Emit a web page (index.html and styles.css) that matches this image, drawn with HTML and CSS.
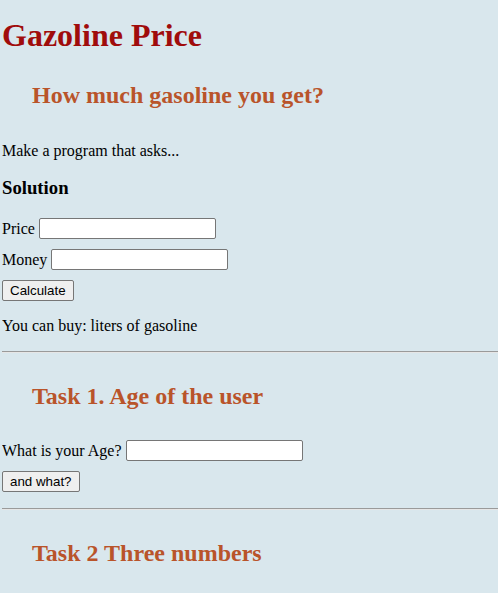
FILE: index.html
```html
<!DOCTYPE html>
<html>
<head>
<meta charset="utf-8">
<title>Gazoline Price</title>
<link rel="stylesheet" href="styles.css">
</head>
<body>
<h1 class="title">Gazoline Price</h1>
<h2 class="task">How much gasoline you get?</h2>
<p class="text intro">Make a program that asks...</p>
<h3 class="sub">Solution</h3>
<div class="form">
  <div class="row"><label>Price</label> <input type="text" class="field"></div>
  <div class="row"><label>Money</label> <input type="text" class="field"></div>
  <div class="row"><button class="btn">Calculate</button></div>
</div>
<p class="text">You can buy: liters of gasoline</p>
<hr class="rule">
<h2 class="task">Task 1. Age of the user</h2>
<div class="form">
  <div class="row"><label>What is your Age?</label> <input type="text" class="field"></div>
  <div class="row"><button class="btn">and what?</button></div>
</div>
<hr class="rule">
<h2 class="task">Task 2 Three numbers</h2>
</body>
</html>
```
FILE: styles.css
```css
html { background: #d9e7ed; }
body {
  margin: 0 0 0 2px;
  font-family: "Liberation Serif", "Times New Roman", serif;
  font-size: 16px;
  color: #000;
  background: #d9e7ed;
}
.title {
  font-size: 32px;
  color: #a00c0c;
  margin: 17px 0 18px;
}
.task {
  font-size: 24px;
  color: #b9542a;
  padding: 10px 0 10px 30px;
  margin: 18px 0 20px;
}
.text { margin: 16px 0; }
.intro { margin-top: 23px; }
.sub { font-size: 18.72px; margin: 17px 0 19px; }
.form { display: flex; flex-direction: column; gap: 10px; }
.row { display: flex; align-items: center; gap: 4px; }
.field {
  width: 177px;
  height: 21px;
  box-sizing: border-box;
  border: 1px solid #767676;
  border-radius: 2px;
  background: #fff;
  margin: 0;
  padding: 1px 2px;
  font: 13.33px "Liberation Sans", Arial, sans-serif;
}
.btn {
  height: 21px;
  box-sizing: border-box;
  border: 1px solid #767676;
  border-radius: 2px;
  background: #efefef;
  margin: 0;
  padding: 1px 7px;
  font: 13.33px "Liberation Sans", Arial, sans-serif;
  color: #000;
}
.rule {
  margin: 16px 0 20px;
  border: 0;
  border-top: 1px solid #9a9a9a;
  border-bottom: 1px solid #e6e6e6;
  height: 0;
}
```
